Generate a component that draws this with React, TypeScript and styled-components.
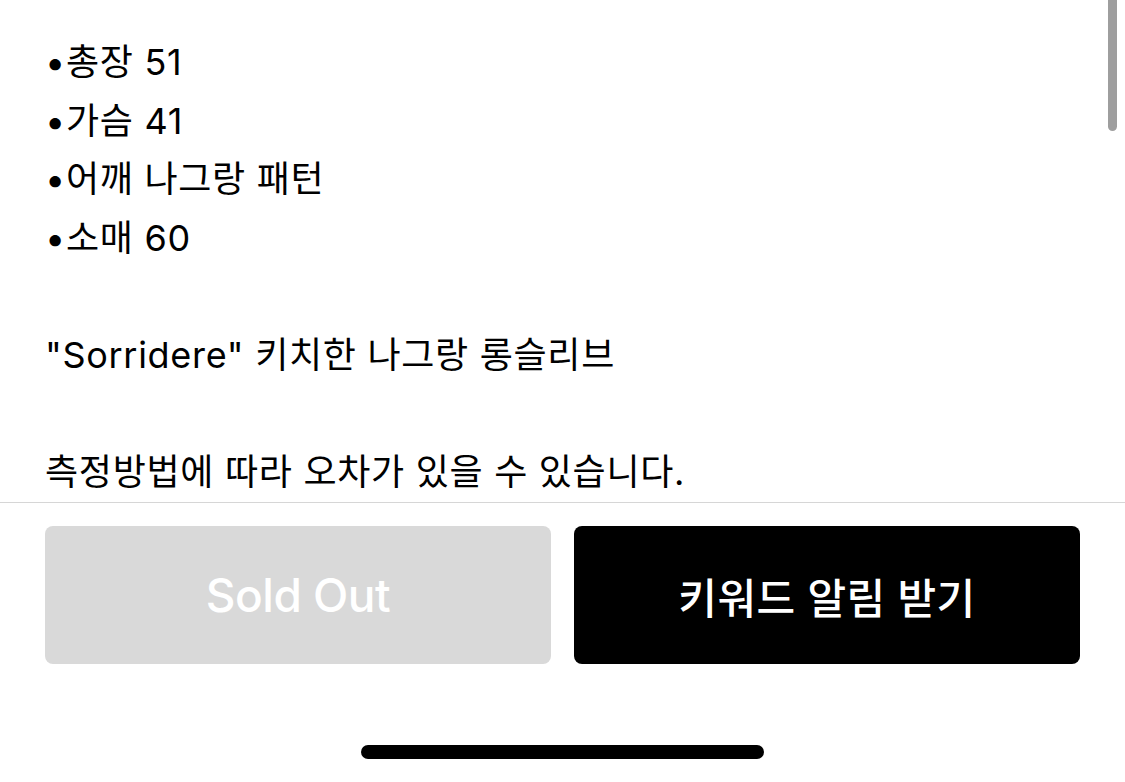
import styled, { createGlobalStyle } from "styled-components";

const GlobalStyle = createGlobalStyle`
  html, body {
    margin: 0;
    padding: 0;
    background: #ffffff;
  }
  * {
    box-sizing: border-box;
  }
`;

const fontStack = `"Inter", "Noto Sans CJK KR", sans-serif`;

const lines = [
  "•총장 51",
  "•가슴 41",
  "•어깨 나그랑 패턴",
  "•소매 60",
  "",
  "\"Sorridere\" 키치한 나그랑 롱슬리브",
  "",
  "측정방법에 따라 오차가 있을 수 있습니다.",
];

const Screen = styled.div`
  position: relative;
  width: 1125px;
  height: 782px;
  overflow: hidden;
  display: flex;
  flex-direction: column;
  background: #ffffff;
  font-family: ${fontStack};
  color: #000000;
`;

const Description = styled.div`
  height: 503px;
  padding: 33px 0 0 45px;
  border-bottom: 1px solid #d6d6d6;
  overflow: hidden;
`;

const Line = styled.div`
  height: 58.6px;
  line-height: 58.6px;
  font-size: 36px;
  letter-spacing: 0.7px;
  white-space: pre;
`;

const ScrollThumb = styled.div`
  position: absolute;
  top: 0;
  right: 8px;
  width: 9px;
  height: 131px;
  border-radius: 0 0 5px 5px;
  background: #9e9e9e;
`;

const ButtonRow = styled.div`
  display: grid;
  grid-template-columns: 1fr 1fr;
  gap: 23px;
  padding: 23px 45px 0;
`;

const ActionButton = styled.button<{ $dark?: boolean; $size: number; $spacing: number }>`
  height: 138px;
  border: none;
  border-radius: 8px;
  background: ${(p) => (p.$dark ? "#000000" : "#d9d9d9")};
  color: #ffffff;
  font-family: ${fontStack};
  font-size: ${(p) => p.$size}px;
  font-weight: 500;
  letter-spacing: ${(p) => p.$spacing}px;
  display: flex;
  align-items: center;
  justify-content: center;
  padding: 0;
  cursor: pointer;
`;

const HomeBar = styled.div`
  margin: auto auto 23px;
  width: 403px;
  height: 14px;
  border-radius: 7px;
  background: #000000;
`;

export default function App() {
  return (
    <>
      <GlobalStyle />
      <Screen>
        <Description>
          {lines.map((text, i) => (
            <Line key={i}>{text}</Line>
          ))}
        </Description>
        <ScrollThumb />
        <ButtonRow>
          <ActionButton disabled $size={46} $spacing={-0.5}>
            Sold Out
          </ActionButton>
          <ActionButton $dark $size={42} $spacing={0.5}>
            키워드 알림 받기
          </ActionButton>
        </ButtonRow>
        <HomeBar />
      </Screen>
    </>
  );
}
